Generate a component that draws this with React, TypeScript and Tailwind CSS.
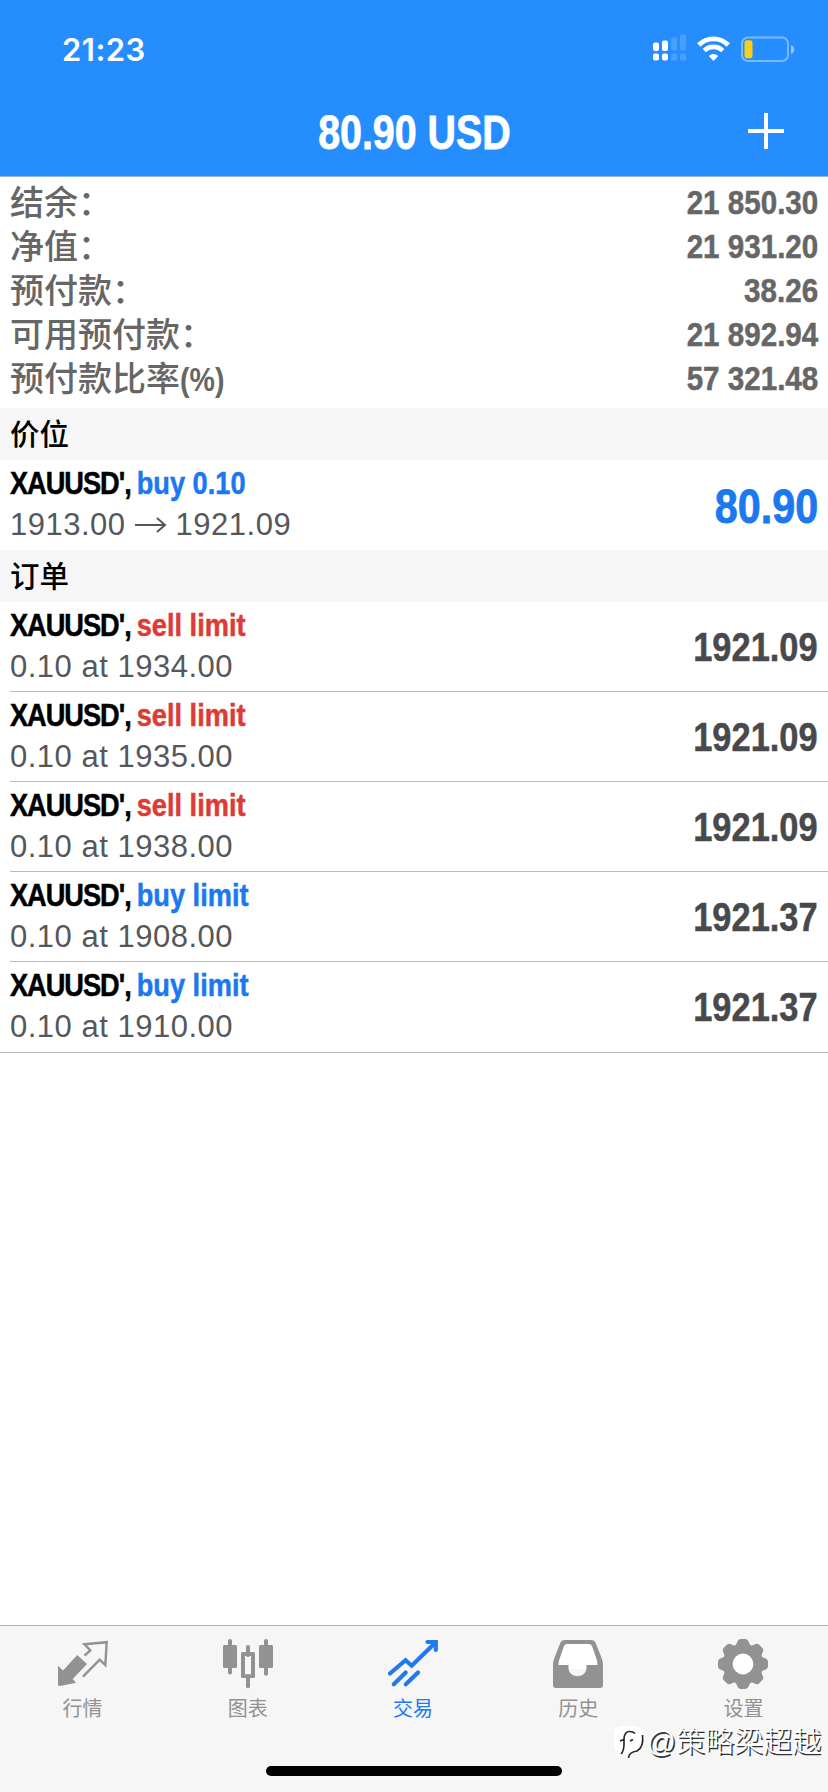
import type { ReactNode } from 'react';

const account = [
  { label: '结余：', value: '21 850.30' },
  { label: '净值：', value: '21 931.20' },
  { label: '预付款：', value: '38.26' },
  { label: '可用预付款：', value: '21 892.94' },
  { label: '预付款比率', unit: '(%)', value: '57 321.48' },
];

const orders = [
  { side: 'sell', price: '1934.00', current: '1921.09' },
  { side: 'sell', price: '1935.00', current: '1921.09' },
  { side: 'sell', price: '1938.00', current: '1921.09' },
  { side: 'buy', price: '1908.00', current: '1921.37' },
  { side: 'buy', price: '1910.00', current: '1921.37' },
];

function StatusIcons() {
  return (
    <div className="flex items-center">
      <svg width="34" height="30" viewBox="0 0 34 30" fill="white">
        <rect x="0" y="8.5" width="6" height="8.5" rx="2" />
        <rect x="9" y="6.5" width="6" height="10.5" rx="2" />
        <rect x="0" y="19.5" width="6" height="7" rx="2" />
        <rect x="9" y="19.5" width="6" height="7" rx="2" />
        <g opacity="0.16">
          <rect x="18" y="3.5" width="6" height="13" rx="1.5" />
          <rect x="27" y="0.5" width="6" height="16" rx="1.5" />
          <rect x="18" y="19.5" width="6" height="7" rx="1.5" />
          <rect x="27" y="19.5" width="6" height="7" rx="1.5" />
        </g>
      </svg>
      <svg className="ml-[10px]" width="33" height="30" viewBox="0 0 33 30" fill="none" stroke="white">
        <path d="M1.8 11C9.8 2.7 23.2 2.7 31.2 11" strokeWidth="4.8" />
        <path d="M7.3 16.7C12.4 11.6 20.6 11.6 25.7 16.7" strokeWidth="4.6" />
        <path d="M11.8 22C14.4 19.2 18.6 19.2 21.2 22L16.5 27Z" fill="white" stroke="none" />
      </svg>
      <svg className="ml-[11px]" width="54" height="30" viewBox="0 0 54 30" fill="none">
        <rect x="1" y="3.5" width="46" height="23.5" rx="6" stroke="white" strokeOpacity="0.4" strokeWidth="2" />
        <rect x="3.5" y="6.3" width="8" height="18" rx="2.5" fill="#fccf17" />
        <path d="M50 11C52.2 12 53.2 13.5 53.2 15.5S52.2 19 50 20Z" fill="white" fillOpacity="0.5" />
      </svg>
    </div>
  );
}

function QuotesIcon() {
  return (
    <svg width="50" height="50" viewBox="0 0 50 50">
      <path d="M0 26.7L5 31.5L19.3 16L29 25L14.7 40L18.2 43.8L2 47Q0 47.3 0 45Z" fill="currentColor" />
      <path
        d="M25 37.7L41.7 20.7L47.3 26L48.7 3.2L26.5 5.3L32.3 11.4L26.5 16.7"
        fill="none"
        stroke="currentColor"
        strokeWidth="2.4"
      />
    </svg>
  );
}

function ChartIcon() {
  return (
    <svg width="50" height="50" viewBox="0 0 50 50" fill="currentColor">
      <rect x="5" y="0" width="4" height="35.5" rx="2" />
      <rect x="0" y="6" width="14" height="23" rx="1.5" />
      <rect x="23" y="6" width="4" height="12" rx="2" />
      <rect x="23" y="36" width="4" height="13.3" rx="2" />
      <path fillRule="evenodd" d="M19.5 13H30.5Q32 13 32 14.5V37.5Q32 39 30.5 39H19.5Q18 39 18 37.5V14.5Q18 13 19.5 13ZM22 17V35.3H28V17Z" />
      <rect x="41" y="0" width="4" height="36.8" rx="2" />
      <rect x="36" y="6" width="14" height="23" rx="1.5" />
    </svg>
  );
}

function TradeIcon() {
  return (
    <svg
      width="50"
      height="50"
      viewBox="0 0 50 50"
      fill="none"
      stroke="currentColor"
      strokeWidth="4.2"
      strokeLinecap="round"
    >
      <path d="M2 34.5L17.5 21.2L23.7 26.7L47 4" />
      <path d="M39.5 3H47.8V11" />
      <path d="M5.8 45.2L17.7 33.5" />
      <path d="M17.8 45.2L30 33.5" />
    </svg>
  );
}

function HistoryIcon() {
  return (
    <svg width="50" height="50" viewBox="0 0 50 50">
      <path d="M12 4H38L45 22V30H5V22Z" fill="white" />
      <path
        fill="currentColor"
        fillRule="evenodd"
        d="M12 1H38Q41.6 1 42.8 4.2L48.6 19Q50 22.6 50 26V46Q50 49 47 49H3Q0 49 0 46V26Q0 22.6 1.4 19L7.2 4.2Q8.4 1 12 1ZM14 5Q11.8 5 11 7L7 18.5Q5.4 22.5 5.4 26H15.5V28.5C15.5 40 33.5 40 33.5 28.5V26H44.6Q44.6 22.5 43 18.5L39 7Q38.2 5 36 5Z"
      />
    </svg>
  );
}

function SettingsIcon() {
  return (
    <svg width="50" height="50" viewBox="0 0 50 50" fill="currentColor">
      <circle cx="25" cy="25" r="12" fill="white" />
      <path
        fillRule="evenodd"
        d="M25 5A20 20 0 1 1 25 45A20 20 0 1 1 25 5ZM25 14.6A10.4 10.4 0 1 0 25 35.4A10.4 10.4 0 1 0 25 14.6Z"
      />
      {[0, 45, 90, 135, 180, 225, 270, 315].map((angle) => (
        <path
          key={angle}
          transform={`rotate(${angle} 25 25)`}
          d="M16 8Q18.3 6 19.3 3Q20.2 0 22.5 0H27.5Q29.8 0 30.7 3Q31.7 6 34 8Z"
        />
      ))}
    </svg>
  );
}

const tabs = [
  { label: '行情', icon: QuotesIcon },
  { label: '图表', icon: ChartIcon },
  { label: '交易', icon: TradeIcon, active: true },
  { label: '历史', icon: HistoryIcon },
  { label: '设置', icon: SettingsIcon },
];

function SectionTitle({ children }: { children: ReactNode }) {
  return (
    <h2 className="flex h-[52px] items-center bg-[#f6f6f6] px-[10px] pt-[2px] text-[29.5px] leading-none font-medium text-black">
      {children}
    </h2>
  );
}

function OrderTitle({ action, sell }: { action: string; sell?: boolean }) {
  return (
    <div className="flex h-[40px] origin-left scale-x-[0.85] text-[32px] leading-[38px] font-bold whitespace-nowrap text-black [-webkit-text-stroke:0.5px]">
      <span className="tracking-[-1.2px]">XAUUSD',</span>
      <span className={sell ? 'ml-[7px] text-[#dc3c35]' : 'ml-[7px] text-[#1c78ee]'}>{action}</span>
    </div>
  );
}

export default function App() {
  return (
    <div className="relative flex h-[1792px] w-[828px] flex-col overflow-hidden bg-white font-['Liberation_Sans','Noto_Sans_CJK_SC',sans-serif]">
      <header className="h-[177px] border-b border-[#8fb3dc] bg-[#268dff] text-white">
        <div className="flex h-[88px] items-start justify-between pt-[34px] pr-[33px] pl-[62px]">
          <span className="font-[Inter,sans-serif] text-[31px] leading-[32px] font-semibold tracking-[0.5px]">21:23</span>
          <StatusIcons />
        </div>
        <div className="grid h-[88px] grid-cols-[1fr_auto_1fr] items-center">
          <span />
          <h1 className="scale-x-[0.82] pt-[2px] text-[48px] leading-[86px] font-bold [-webkit-text-stroke:0.8px]">80.90 USD</h1>
          <svg className="mr-[44px] mb-[2px] justify-self-end" width="36" height="36" viewBox="0 0 36 36" stroke="white" strokeWidth="4">
            <path d="M18 0V36M0 18H36" />
          </svg>
        </div>
      </header>

      <section className="h-[231px] px-[10px] pt-[3px] text-[34px] leading-[44px] text-[#666]">
        {account.map((item) => (
          <div key={item.label} className="flex h-[44px] items-center justify-between">
            <span className="flex pt-[2px] font-medium">
              {item.label}
              {item.unit && <span className="origin-left scale-x-[0.84] font-bold">{item.unit}</span>}
            </span>
            <span className="origin-right scale-x-[0.87] font-bold [-webkit-text-stroke:0.5px]">{item.value}</span>
          </div>
        ))}
      </section>

      <SectionTitle>价位</SectionTitle>
      <div className="flex h-[90px] items-center justify-between px-[10px]">
        <div className="pb-[1px]">
          <OrderTitle action="buy 0.10" />
          <div className="flex h-[41px] items-center text-[31px] leading-[41px] tracking-[0.5px] text-[#56575b]">
            1913.00
            <svg className="mx-[8.5px]" width="33" height="16" viewBox="0 0 33 16" fill="none" stroke="currentColor" strokeWidth="2">
              <path d="M1 8H31M23 1L31 8L23 15" />
            </svg>
            1921.09
          </div>
        </div>
        <span className="origin-right scale-x-[0.86] pt-[4px] text-[48px] leading-none font-bold text-[#1c78ee] [-webkit-text-stroke:0.8px]">
          80.90
        </span>
      </div>

      <SectionTitle>订单</SectionTitle>
      <ul className="border-b border-[#b9bcbf]">
        {orders.map((order) => (
          <li key={order.price} className="group pl-[10px]">
            <div className="flex h-[90px] items-center justify-between border-b border-[#b9bcbf] pr-[10px] group-last:border-transparent">
              <div className="pb-[1px]">
                <OrderTitle action={`${order.side} limit`} sell={order.side === 'sell'} />
                <div className="h-[41px] text-[31px] leading-[41px] tracking-[0.5px] text-[#56575b]">
                  0.10 at {order.price}
                </div>
              </div>
              <span className="origin-right scale-x-[0.86] text-[40px] leading-none font-bold text-[#48494d] [-webkit-text-stroke:0.5px]">
                {order.current}
              </span>
            </div>
          </li>
        ))}
      </ul>

      <footer className="mt-auto h-[167px] border-t border-[#b1b1b1] bg-[#f6f6f6]">
        <nav className="grid grid-cols-5 pt-[13px] pr-[2px]">
          {tabs.map((tab) => {
            const Icon = tab.icon;
            return (
              <a
                key={tab.label}
                className={`flex flex-col items-center ${tab.active ? 'text-[#2079ee]' : 'text-[#929292]'}`}
              >
                <Icon />
                <span className="mt-[6px] text-[20px] leading-[28px]">{tab.label}</span>
              </a>
            );
          })}
        </nav>
        <div className="mx-auto mt-[43px] h-[10px] w-[296px] rounded-full bg-black" />
      </footer>

      <div className="absolute right-[7px] bottom-[32px] flex items-center text-white">
        <svg className="mr-[2px]" width="32" height="36" viewBox="0 0 32 36" fill="none">
          <path d="M9 2H20Q30 2 30 12V19Q29 27 19 30L16 34L15 30H9Q1 29 1 21V10Q1 2 9 2Z" fill="white" />
          <path
            d="M8 30Q11 27 11 20V14Q12 7 17 7.5Q20 7.5 22 9.5M7 17L11 15.5M17 17L20 15.5M29.5 11Q31 23 24 27Q16 28 15.5 34"
            stroke="#222"
            strokeWidth="1.6"
          />
        </svg>
        <span className="text-[29px] leading-[36px] font-light [text-shadow:1.5px_1.5px_0.5px_#333]">@策略梁超越</span>
      </div>
    </div>
  );
}
